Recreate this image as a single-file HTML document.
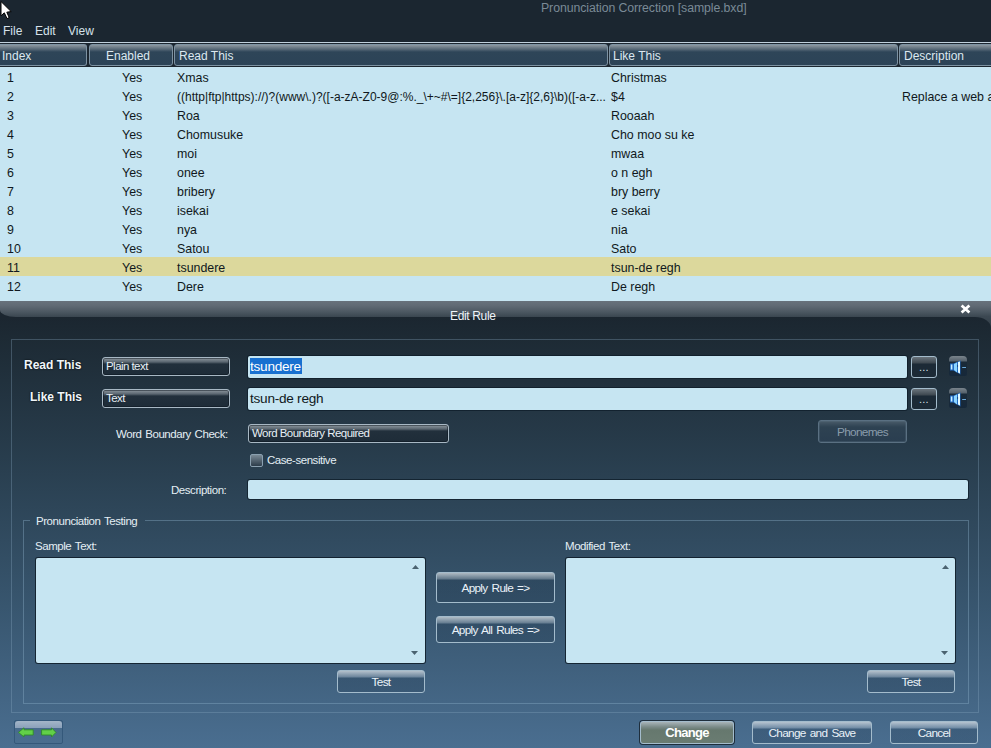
<!DOCTYPE html>
<html><head><meta charset="utf-8">
<style>
*{margin:0;padding:0;box-sizing:border-box}
html,body{width:991px;height:748px;overflow:hidden;background:#1b2630;font-family:"Liberation Sans",sans-serif;font-size:12px}
.a{position:absolute;white-space:nowrap}
#title{left:541px;top:1px;color:#7a8a96;font-size:12.3px;letter-spacing:-0.08px}
.menu{top:24px;color:#d6e2ea;font-size:12px}
#hdrline{left:0;top:42px;width:991px;height:1px;background:#c0d0dc}
.hc{top:44px;height:22px;border:1px solid #7d92a2;border-radius:3px;
 background:linear-gradient(#8c979f 0px,#4b5e6e 5px,#2e4558 7px,#2c4357 100%);color:#dce8f0;font-size:12px;padding-top:4px}
#grid{left:0;top:67px;width:991px;height:234px;background:#c6e5f2}
.r{position:absolute;left:0;width:991px;height:19px;color:#101820}
.r span{position:absolute;top:4px;white-space:nowrap;font-size:12.4px}
.r span.rx{font-size:12px;top:4px}
.sel{background:#dcd89c}
/* dialog */
#dtitle{left:0;top:301px;width:991px;height:16px;border-bottom-left-radius:16px 7px;background:linear-gradient(#68727c 0,#606a74 30%,#48545e 75%,#3a4650 100%)}
#dleft{left:0;top:306px;width:24px;height:14px;background:#1b2630}
#dright{left:950px;top:316px;width:41px;height:20px;background:linear-gradient(#3c4852,#2c3842)}
#dbody{left:0;top:317px;width:991px;height:431px;border-radius:0 16px 0 0 / 0 11px 0 0;
 background:linear-gradient(#1b2630 0px,#1d2a34 20px,#283d4d 140px,#38566f 290px,#4a6e90 431px)}
#panel{left:11px;top:339px;width:968px;height:374px;border:1px solid rgba(140,170,195,0.32)}
.lbl{color:#e4eef4;font-size:11.5px;letter-spacing:-0.45px;word-spacing:1px}
.blbl{color:#f0f6fa;font-size:12px;font-weight:bold;text-shadow:0 0 2px #000}
.combo{border:1px solid #a8b8c4;border-radius:3px;box-shadow:inset 0 0 0 1px rgba(10,20,30,0.5);background:linear-gradient(#8e989f 0,#5a6670 4px,#22303c 6px,#1e2c38 100%);color:#e8f0f6;font-size:11.5px;letter-spacing:-0.55px}
.combo span{position:absolute;left:3px;top:2px}
.field{background:#c6e5f2;border-radius:2px;color:#101820;box-shadow:0 0 0 1px rgba(14,28,40,0.75)}
.btn{border:1px solid #a4bccc;border-radius:3px;background:linear-gradient(rgba(255,255,255,0.6) 0,rgba(255,255,255,0.22) 6px,rgba(20,40,60,0.2) 7px,rgba(20,40,60,0.2) 100%);color:#eaf2f8;text-align:center;font-size:11.8px;letter-spacing:-0.7px;word-spacing:1.5px}
.gb{border:1px solid rgba(140,175,200,0.4)}
.tri{position:absolute;width:0;height:0;border-left:4px solid transparent;border-right:4px solid transparent}
</style></head><body>
<!-- cursor -->
<svg class="a" style="left:0;top:0" width="16" height="22" viewBox="0 0 16 22"><path d="M1 1.5 L1 15.8 L4.3 12.8 L7 18.6 L9.2 17.6 L6.8 12.2 L11.2 11.6 Z" fill="#fff" stroke="#000" stroke-width="1" stroke-linejoin="miter"/></svg>
<div class="a" id="title">Pronunciation Correction [sample.bxd]</div>
<div class="a menu" style="left:3px">File</div>
<div class="a menu" style="left:35px">Edit</div>
<div class="a menu" style="left:68px">View</div>

<div class="a" id="hdrline"></div>
<div class="a hc" style="left:0;width:87px;padding-left:2px;border-left:none;border-radius:0 3px 3px 0">Index</div>
<div class="a hc" style="left:89px;width:84px;padding-left:16px">Enabled</div>
<div class="a hc" style="left:174px;width:434px;padding-left:4px">Read This</div>
<div class="a hc" style="left:609px;width:289px;padding-left:3px">Like This</div>
<div class="a hc" style="left:899px;width:100px;padding-left:4px">Description</div>

<div class="a" id="grid">
 <div class="r" style="top:0"><span style="left:7px">1</span><span style="left:122px">Yes</span><span style="left:177px">Xmas</span><span style="left:611px">Christmas</span></div>
 <div class="r" style="top:19px"><span style="left:7px">2</span><span style="left:122px">Yes</span><span class="rx" style="left:177px">((http|ftp|https)://)?(www\.)?([-a-zA-Z0-9@:%._\+~#\=]{2,256}\.[a-z]{2,6}\b)([-a-z...</span><span style="left:611px">$4</span><span style="left:902px">Replace a web address</span></div>
 <div class="r" style="top:38px"><span style="left:7px">3</span><span style="left:122px">Yes</span><span style="left:177px">Roa</span><span style="left:611px">Rooaah</span></div>
 <div class="r" style="top:57px"><span style="left:7px">4</span><span style="left:122px">Yes</span><span style="left:177px">Chomusuke</span><span style="left:611px">Cho moo su ke</span></div>
 <div class="r" style="top:76px"><span style="left:7px">5</span><span style="left:122px">Yes</span><span style="left:177px">moi</span><span style="left:611px">mwaa</span></div>
 <div class="r" style="top:95px"><span style="left:7px">6</span><span style="left:122px">Yes</span><span style="left:177px">onee</span><span style="left:611px">o n egh</span></div>
 <div class="r" style="top:114px"><span style="left:7px">7</span><span style="left:122px">Yes</span><span style="left:177px">bribery</span><span style="left:611px">bry berry</span></div>
 <div class="r" style="top:133px"><span style="left:7px">8</span><span style="left:122px">Yes</span><span style="left:177px">isekai</span><span style="left:611px">e sekai</span></div>
 <div class="r" style="top:152px"><span style="left:7px">9</span><span style="left:122px">Yes</span><span style="left:177px">nya</span><span style="left:611px">nia</span></div>
 <div class="r" style="top:171px"><span style="left:7px">10</span><span style="left:122px">Yes</span><span style="left:177px">Satou</span><span style="left:611px">Sato</span></div>
 <div class="r sel" style="top:190px"><span style="left:7px">11</span><span style="left:122px">Yes</span><span style="left:177px">tsundere</span><span style="left:611px">tsun-de regh</span></div>
 <div class="r" style="top:209px"><span style="left:7px">12</span><span style="left:122px">Yes</span><span style="left:177px">Dere</span><span style="left:611px">De regh</span></div>
</div>

<!-- dialog -->
<div class="a" id="dleft"></div>
<div class="a" id="dright"></div>
<div class="a" id="dtitle"></div>
<div class="a" id="dbody"></div>
<div class="a" style="left:450px;top:309px;color:#eef4f8;font-size:12px;letter-spacing:-0.35px">Edit Rule</div>
<svg class="a" style="left:960px;top:304px" width="11" height="10" viewBox="0 0 11 10"><path d="M1.6 1.4 L9.4 8.6 M9.4 1.4 L1.6 8.6" stroke="#fff" stroke-width="2.7"/></svg>

<div class="a" id="panel"></div>

<div class="a blbl" style="left:24px;top:358px">Read This</div>
<div class="a blbl" style="left:30px;top:390px">Like This</div>
<div class="a combo" style="left:102px;top:357px;width:128px;height:19px"><span>Plain text</span></div>
<div class="a combo" style="left:102px;top:389px;width:128px;height:19px"><span>Text</span></div>
<div class="a field" style="left:248px;top:356px;width:659px;height:22px"></div>
<div class="a" style="left:250px;top:358px;width:52px;height:16px;background:#1870d0"></div>
<div class="a" style="left:250px;top:359px;color:#fff;font-size:13.6px;letter-spacing:-0.25px">tsundere</div>
<div class="a field" style="left:248px;top:388px;width:659px;height:22px"></div>
<div class="a" style="left:250px;top:391px;color:#101820;font-size:13.6px;letter-spacing:-0.25px">tsun-de regh</div>

<div class="a btn" style="left:911px;top:356px;width:26px;height:22px;line-height:20px;color:#d8e0e6;letter-spacing:0.2px;font-size:11px;background:linear-gradient(#6a747c 0,#3e4850 6px,#1c2a36 7px,#1c2a36 100%)">...</div>
<div class="a btn" style="left:911px;top:388px;width:26px;height:22px;line-height:20px;color:#d8e0e6;letter-spacing:0.2px;font-size:11px;background:linear-gradient(#6a747c 0,#3e4850 6px,#1c2a36 7px,#1c2a36 100%)">...</div>

<div class="a" style="left:949px;top:356px;width:18px;height:20px;border-radius:4px 4px 2px 2px;background:linear-gradient(#7a848c 0,#56626c 5px,#1a2a38 6px,#16283a 100%)"></div>
<svg class="a" style="left:949px;top:356px" width="20" height="20" viewBox="0 0 20 20">
<path d="M1 7.5 L4.5 7.5 L11.5 4.5 L11.5 18.5 L4.5 14.5 L1 14.5 Z" fill="#1f68c0"/>
<path d="M1.8 8.5 L3.4 8.5 L3.4 13.5 L1.8 13.5 Z" fill="#c8f0ff"/>
<path d="M5 8 L8 6.5 L8 16.5 L5 14 Z" fill="#8ad4ff"/>
<path d="M9 6 L11 5.5 L11 17.5 L9 16.5 Z" fill="#e0f8ff"/>
<path d="M8.3 9 L9.3 10 L8.3 11 Z" fill="#0e2a50"/>
<path d="M13.2 11.5 L17 11.5" stroke="#6aa8d8" stroke-width="1"/>
</svg>
<div class="a" style="left:949px;top:388px;width:18px;height:20px;border-radius:4px 4px 2px 2px;background:linear-gradient(#7a848c 0,#56626c 5px,#1a2a38 6px,#16283a 100%)"></div>
<svg class="a" style="left:949px;top:388px" width="20" height="20" viewBox="0 0 20 20">
<path d="M1 7.5 L4.5 7.5 L11.5 4.5 L11.5 18.5 L4.5 14.5 L1 14.5 Z" fill="#1f68c0"/>
<path d="M1.8 8.5 L3.4 8.5 L3.4 13.5 L1.8 13.5 Z" fill="#c8f0ff"/>
<path d="M5 8 L8 6.5 L8 16.5 L5 14 Z" fill="#8ad4ff"/>
<path d="M9 6 L11 5.5 L11 17.5 L9 16.5 Z" fill="#e0f8ff"/>
<path d="M8.3 9 L9.3 10 L8.3 11 Z" fill="#0e2a50"/>
<path d="M13.2 11.5 L17 11.5" stroke="#6aa8d8" stroke-width="1"/>
</svg>
<div class="a lbl" style="left:116px;top:428px">Word Boundary Check:</div>
<div class="a combo" style="left:248px;top:424px;width:201px;height:19px"><span style="top:2px">Word Boundary Required</span></div>
<div class="a" style="left:250px;top:454px;width:13px;height:13px;border:1px solid #8aa0b0;border-radius:2px;background:linear-gradient(#7a8a96,#2c3c4a)"></div>
<div class="a lbl" style="left:267px;top:454px">Case-sensitive</div>
<div class="a btn" style="left:818px;top:420px;width:89px;height:23px;line-height:23px;color:#8a9cab;border-color:#5a7082;box-shadow:inset 0 0 0 1px rgba(90,112,130,0.35);background:linear-gradient(#4a5c6a 0,#2e4252 6px,#2a3e50 100%)">Phonemes</div>
<div class="a lbl" style="left:171px;top:484px">Description:</div>
<div class="a field" style="left:248px;top:480px;width:720px;height:19px"></div>

<div class="a gb" style="left:23px;top:521px;width:946px;height:183px;border-top:none"></div>
<div class="a" style="left:23px;top:520px;width:7px;height:1px;background:rgba(140,175,200,0.4)"></div>
<div class="a" style="left:145px;top:520px;width:824px;height:1px;background:rgba(140,175,200,0.4)"></div>
<div class="a lbl" style="left:36px;top:515px">Pronunciation Testing</div>
<div class="a lbl" style="left:35px;top:540px">Sample Text:</div>
<div class="a field" style="left:36px;top:558px;width:389px;height:105px;box-shadow:0 0 0 1px rgba(14,28,40,0.85)"></div>
<div class="a lbl" style="left:565px;top:540px">Modified Text:</div>
<div class="a field" style="left:566px;top:558px;width:389px;height:105px;box-shadow:0 0 0 1px rgba(14,28,40,0.85)"></div>
<svg class="a" style="left:411px;top:564px" width="9" height="6"><path d="M1 5 L4.5 1 L8 5 Z" fill="#4a6270"/></svg>
<svg class="a" style="left:410px;top:650px" width="9" height="6"><path d="M1 1 L8 1 L4.5 5 Z" fill="#4a6270"/></svg>
<svg class="a" style="left:941px;top:564px" width="9" height="6"><path d="M1 5 L4.5 1 L8 5 Z" fill="#4a6270"/></svg>
<svg class="a" style="left:940px;top:650px" width="9" height="6"><path d="M1 1 L8 1 L4.5 5 Z" fill="#4a6270"/></svg>
<div class="a btn" style="left:436px;top:572px;width:119px;height:31px;line-height:30px">Apply Rule =&gt;</div>
<div class="a btn" style="left:436px;top:616px;width:119px;height:27px;line-height:26px">Apply All Rules =&gt;</div>
<div class="a btn" style="left:337px;top:670px;width:88px;height:23px;line-height:22px">Test</div>
<div class="a btn" style="left:867px;top:670px;width:88px;height:23px;line-height:22px">Test</div>

<div class="a btn" style="left:640px;top:721px;width:94px;height:23px;line-height:21px;font-weight:bold;font-size:13px;color:#fff;background:linear-gradient(#a8b4b8 0,#7a8a88 5px,#66786e 8px,#6a7c72 100%);box-shadow:0 0 0 1px #1e2e3c">Change</div>
<div class="a btn" style="left:752px;top:721px;width:120px;height:23px;line-height:22px">Change and Save</div>
<div class="a btn" style="left:890px;top:721px;width:88px;height:23px;line-height:22px">Cancel</div>
<div class="a" style="left:14px;top:720px;width:49px;height:24px;border:1px solid #34587a;border-radius:2px"></div>
<div class="a" style="left:15px;top:721px;width:47px;height:7px;border-radius:3px 3px 0 0;background:linear-gradient(#a4b6c8,#8aa0ba)"></div>
<svg class="a" style="left:14px;top:724px" width="48" height="18" viewBox="0 0 48 18">
<path d="M4.5 8.4 L10 3.8 L10 5.8 L19.2 5.8 L19.2 11 L10 11 L10 13 Z" fill="#62d048" stroke="#2f8a2a" stroke-width="0.9"/>
<path d="M42 8.4 L37.5 3.8 L37.5 5.8 L27.6 5.8 L27.6 11 L37.5 11 L37.5 13 Z" fill="#62d048" stroke="#2f8a2a" stroke-width="0.9"/>
</svg>
</body></html>
